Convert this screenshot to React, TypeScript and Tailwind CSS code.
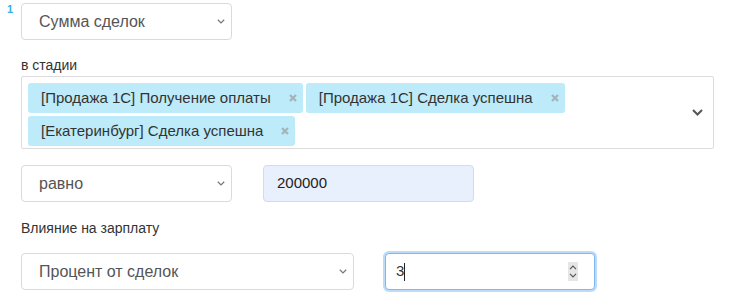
import React from 'react';

const SmallChevron = () => (
  <svg width="8" height="5" viewBox="0 0 8 5" className="shrink-0">
    <path d="M0.8 0.8 L4 3.9 L7.2 0.8" fill="none" stroke="#777" strokeWidth="1.3" />
  </svg>
);

const TagClose = () => (
  <svg width="8" height="8" viewBox="0 0 8 8" className="shrink-0">
    <path d="M1 1 L7 7 M7 1 L1 7" stroke="#a3b3ba" strokeWidth="2.2" />
  </svg>
);

interface SelectBoxProps {
  value: string;
  width: string;
}

const SelectBox: React.FC<SelectBoxProps> = ({ value, width }) => (
  <div
    className={`${width} h-[37px] flex items-center justify-between pl-[17px] pr-[6px] bg-white border border-[#dadada] rounded-[4px] text-[16px] text-[#555]`}
  >
    <span>{value}</span>
    <SmallChevron />
  </div>
);

const Tag: React.FC<{ label: string }> = ({ label }) => (
  <div className="h-[30px] flex items-center pl-[13px] pr-[6px] bg-[#bdebfa] rounded-[3px] text-[15px] text-[#333]">
    <span>{label}</span>
    <span className="ml-[18px] flex items-center">
      <TagClose />
    </span>
  </div>
);

const stages = [
  '[Продажа 1С] Получение оплаты',
  '[Продажа 1С] Сделка успешна',
  '[Екатеринбург] Сделка успешна',
];

export default function App() {
  return (
    <div className="w-[732px] h-[305px] bg-white flex font-['Liberation_Sans',Arial,sans-serif]">
      <div className="w-[21px] pl-[7px] pt-[4px] text-[11px] leading-[11px] font-bold text-[#3aaee6]">1</div>

      <div className="w-[693px] pt-[3px]">
        <SelectBox value="Сумма сделок" width="w-[211px]" />

        <div className="mt-[17px] mb-[3px] text-[14px] leading-[16px] text-[#333]">в стадии</div>
        <div className="h-[73px] flex items-center border border-[#dcdcdc] rounded-[2px] pl-[6px] pr-[10px]">
          <div className="flex-1 self-start pt-[6px] flex flex-wrap gap-x-[3px] gap-y-[3px]">
            {stages.map((s) => (
              <Tag key={s} label={s} />
            ))}
          </div>
          <svg width="11" height="7" viewBox="0 0 11 7" className="shrink-0">
            <path d="M1 1 L5.5 5.5 L10 1" fill="none" stroke="#555" strokeWidth="2" />
          </svg>
        </div>

        <div className="mt-[16px] flex gap-[31px]">
          <SelectBox value="равно" width="w-[211px]" />
          <div className="w-[211px] h-[37px] flex items-center pl-[13px] bg-[#e8f0fe] border border-[#d6dbe3] rounded-[4px] text-[15px] text-[#222]">
            200000
          </div>
        </div>

        <div className="mt-[18px] mb-[17px] text-[14px] leading-[16px] text-[#333]">Влияние на зарплату</div>

        <div className="flex gap-[31px]">
          <SelectBox value="Процент от сделок" width="w-[333px]" />
          <div className="w-[210px] h-[37px] flex items-center pl-[10px] pr-[16px] bg-white border border-[#7fb8ee] rounded-[4px] shadow-[0_0_0_2px_#bcdcfa] text-[15px] text-[#333]">
            <span>3</span>
            <span className="w-px h-[18px] bg-[#222]" />
            <span className="ml-auto w-[10px] h-[19px] bg-[#e6e6e6] flex flex-col items-center justify-center gap-[3px]">
              <svg width="8" height="5" viewBox="0 0 8 5">
                <path d="M1 4.2 L4 1 L7 4.2" fill="none" stroke="#555" strokeWidth="1.1" />
              </svg>
              <svg width="8" height="5" viewBox="0 0 8 5">
                <path d="M1 0.8 L4 4 L7 0.8" fill="none" stroke="#555" strokeWidth="1.1" />
              </svg>
            </span>
          </div>
        </div>
      </div>
    </div>
  );
}
